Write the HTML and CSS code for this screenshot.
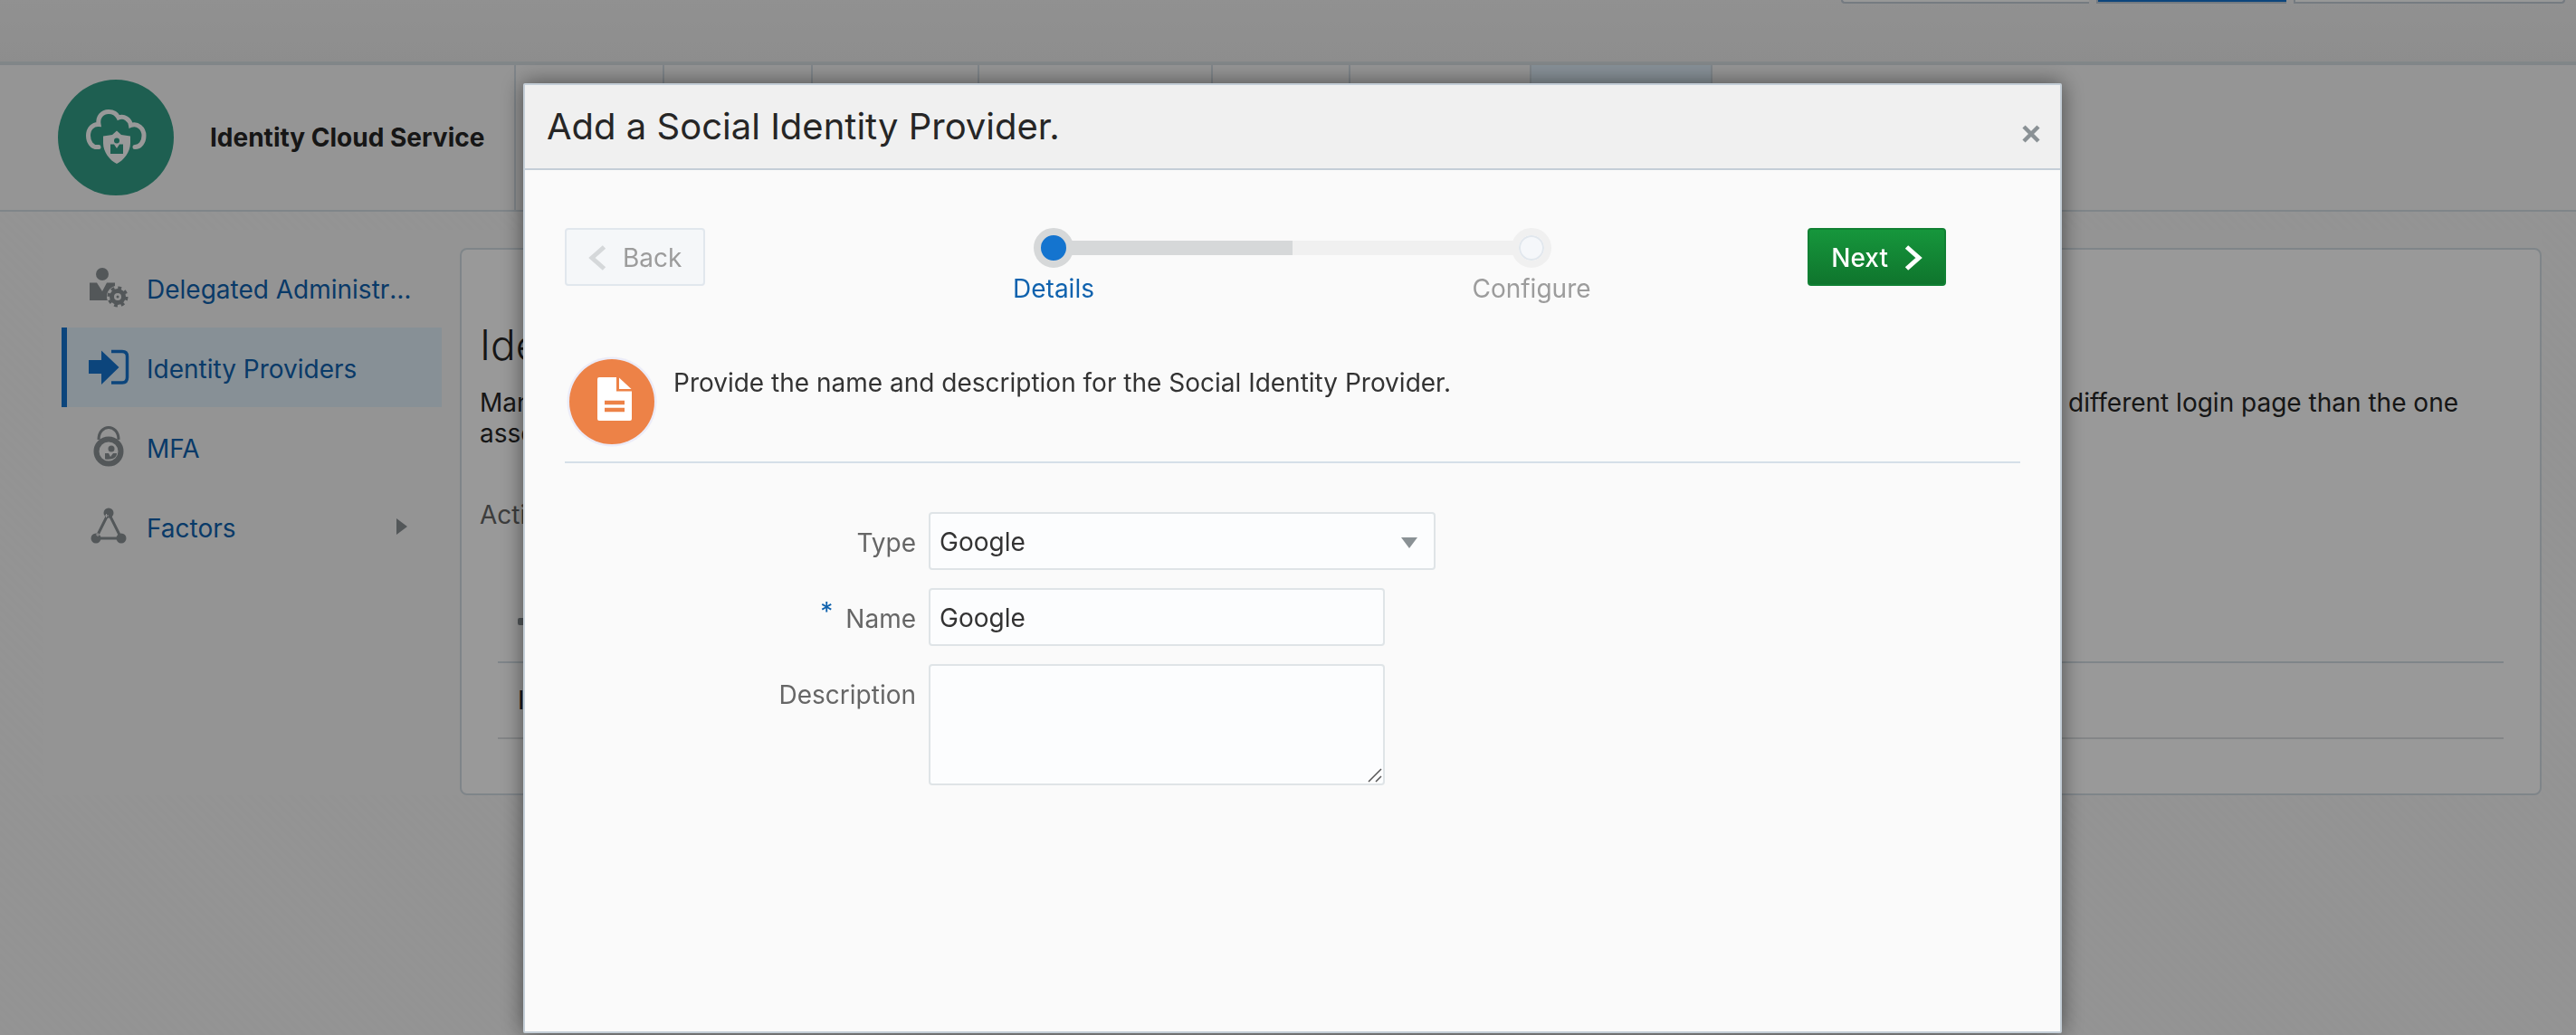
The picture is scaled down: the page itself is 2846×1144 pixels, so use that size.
FILE: index.html
```html
<!DOCTYPE html>
<html lang="en">
<head>
<meta charset="utf-8">
<title>Identity Cloud Service</title>
<link rel="stylesheet" href="styles.css">
</head>
<body>
<div class="page">
  <div class="topbar">
    <button class="topbar-button" type="button" aria-label="Previous"></button>
    <button class="topbar-button topbar-button-active" type="button" aria-label="Current"></button>
    <button class="topbar-button topbar-button-last" type="button" aria-label="Next view"></button>
  </div>

  <header class="service-header">
    <div class="service-brand">
      <svg class="service-logo" viewBox="0 0 128 128" aria-hidden="true">
        <circle cx="64" cy="64" r="64" fill="#329f87"/>
        <path d="M45 74.500C37 75.500 33.500 68 33.500 62C33.500 54 39 49 45 49.500C43.500 41 49 35.500 56 35.500C61 35.500 65 38 67 42C73 39.500 79.500 44 80.500 50.500C88 47.500 95 54 95 62C95 69 91 74.500 85 74.500" fill="none" stroke="#fff" stroke-width="5" stroke-linecap="round"/>
        <path d="M65 56.500L70 61L80 62.500V70C80 80 73 89 65 93C57 89 50 80 50 70V62.500L60 61Z" fill="#fff"/>
        <circle cx="65" cy="67.500" r="3" fill="#329f87"/>
        <path d="M58 71.500H62L65 76L68 71.500H72V82H58Z" fill="#329f87"/>
      </svg>
      <span class="service-name">Identity Cloud Service</span>
    </div>
    <nav class="service-tabs" aria-label="Service sections">
      <a class="tab tab-users" href="#" aria-label="Dashboard"></a>
      <a class="tab tab-users" href="#" aria-label="Users"></a>
      <a class="tab tab-groups" href="#" aria-label="Groups"></a>
      <a class="tab tab-apps" href="#" aria-label="Applications"></a>
      <a class="tab tab-jobs" href="#" aria-label="Jobs"></a>
      <a class="tab tab-wide" href="#" aria-label="Reports"></a>
      <a class="tab tab-wide tab-selected" href="#" aria-label="Security"></a>
    </nav>
  </header>

  <main class="workspace">
    <nav class="side-nav" aria-label="Security">
      <a class="side-item" href="#">
        <svg class="side-icon" viewBox="0 0 48 48" aria-hidden="true">
          <g fill="#8a9195">
            <circle cx="17" cy="9" r="7"/>
            <path d="M3 18.500H11L17 28L22 18.500H31V22C25 24 22 29 22 33C22 35 22 37 23 38H3Z"/>
          </g>
          <circle cx="34" cy="34" r="6.500" fill="none" stroke="#8a9195" stroke-width="5"/>
          <circle cx="34" cy="34" r="9.500" fill="none" stroke="#8a9195" stroke-width="4" stroke-dasharray="3.700 3.760"/>
          <circle cx="34" cy="34" r="1.500" fill="#8a9195"/>
        </svg>
        <span class="side-label">Delegated Administrators</span>
      </a>
      <a class="side-item side-item-selected" href="#" aria-current="page">
        <svg class="side-icon" viewBox="0 0 48 48" aria-hidden="true">
          <path d="M2 16H16V5.500L35.500 24L16 43V31H2Z" fill="#1474cf"/>
          <path d="M27 6.500H39Q44.500 6.500 44.500 12V35Q44.500 41 39 41H27" fill="none" stroke="#1474cf" stroke-width="3.500"/>
        </svg>
        <span class="side-label">Identity Providers</span>
      </a>
      <a class="side-item" href="#">
        <svg class="side-icon" viewBox="0 0 48 48" aria-hidden="true">
          <g fill="none" stroke="#8a9195">
            <path d="M13 16C13 -2 35 -2 35 16" stroke-width="3"/>
            <circle cx="24" cy="29" r="13.500" stroke-width="6"/>
          </g>
          <circle cx="27" cy="26" r="3.500" fill="#8a9195"/>
          <path d="M20 31H24L26 35L29 31H33C33 36 28 38.500 20 37.500Z" fill="#8a9195"/>
        </svg>
        <span class="side-label">MFA</span>
      </a>
      <a class="side-item" href="#">
        <svg class="side-icon" viewBox="0 0 48 48" aria-hidden="true">
          <path d="M24 9L10 37H38Z" fill="none" stroke="#8a9195" stroke-width="3"/>
          <g fill="#8a9195">
            <circle cx="24" cy="9" r="5.500"/>
            <circle cx="10" cy="37" r="5.500"/>
            <circle cx="38" cy="37" r="5.500"/>
          </g>
          <path d="M19.500 12H24M21.500 10V14M10 33H14M12 31V35" stroke="#f7f7f7" stroke-width="1"/>
        </svg>
        <span class="side-label">Factors</span>
        <svg class="side-arrow" viewBox="0 0 12 18" aria-hidden="true"><path d="M0 0L12 9L0 18Z" fill="#8a9195"/></svg>
      </a>
    </nav>

    <section class="panel">
      <h1 class="panel-title">Identity Providers</h1>
      <p class="panel-line"><span>Manage the identity providers that your users can sign in with.</span><span>Each account can be given a different login page than the one</span></p>
      <p class="panel-line"><span>associated with the service.</span></p>
      <p class="panel-note">Activate a provider to use it.</p>
      <table class="provider-table">
        <thead>
          <tr><th scope="col">
            <svg class="menu-icon" viewBox="0 0 32 12" role="img" aria-label="Actions"><rect x="0" y="2" width="32" height="8" rx="2" fill="#8a9195"/></svg>
          </th></tr>
        </thead>
        <tbody>
          <tr><td>Identity provider</td></tr>
        </tbody>
      </table>
    </section>
  </main>
</div>

<div class="overlay">
  <div class="dialog" role="dialog" aria-modal="true" aria-labelledby="dialog-title">
    <header class="dialog-header">
      <h2 class="dialog-title" id="dialog-title">Add a Social Identity Provider.</h2>
      <button class="dialog-close" type="button" aria-label="Close">
        <svg class="close-icon" viewBox="0 0 20 20" aria-hidden="true"><path d="M2 2L18 18M18 2L2 18" stroke="#8a9195" stroke-width="4.500"/></svg>
      </button>
    </header>

    <form class="dialog-body">
      <div class="wizard">
        <button class="button button-back" type="button" disabled>
          <svg class="chevron" viewBox="0 0 20 28" aria-hidden="true"><path d="M17.500 2L4 14L17.500 26" fill="none" stroke="#d5d8da" stroke-width="5"/></svg>
          Back
        </button>
        <ol class="train">
          <li class="stop">
            <div class="stop-track">
              <span class="rail"></span>
              <span class="stop-marker stop-marker-current"></span>
              <span class="rail rail-done"></span>
            </div>
            <a class="stop-label" href="#" aria-current="step">Details</a>
          </li>
          <li class="stop">
            <div class="stop-track">
              <span class="rail rail-todo"></span>
              <span class="stop-marker"></span>
              <span class="rail"></span>
            </div>
            <span class="stop-label stop-label-disabled">Configure</span>
          </li>
        </ol>
        <button class="button button-next" type="button">
          Next
          <svg class="chevron" viewBox="0 0 20 28" aria-hidden="true"><path d="M2.500 2L16 14L2.500 26" fill="none" stroke="#fff" stroke-width="5"/></svg>
        </button>
      </div>

      <div class="intro">
        <svg class="intro-icon" viewBox="0 0 104 104" aria-hidden="true">
          <circle cx="52" cy="52" r="49.500" fill="#ececf8"/>
          <circle cx="52" cy="52" r="47" fill="#ed8247"/>
          <path d="M37 25H57V40.500H74V71Q74 73 72 73H38Q36 73 36 71V27Q36 25 38 25Z" fill="#fff"/>
          <path d="M60 25.500L73.500 38H60Z" fill="#fff"/>
          <path d="M44 53H66M44 61H66" stroke="#ed8247" stroke-width="4.500"/>
        </svg>
        <p class="intro-text">Provide the name and description for the Social Identity Provider.</p>
      </div>

      <div class="fields">
        <label class="field-label" for="type">Type</label>
        <div class="select-box">
          <select class="control control-select" id="type"><option>Google</option></select>
          <svg class="select-arrow" viewBox="0 0 18 12" aria-hidden="true"><path d="M0 0H18L9 12Z" fill="#8a9195"/></svg>
        </div>

        <label class="field-label" for="name"><span class="required">*</span>Name</label>
        <input class="control" id="name" type="text" value="Google" required>

        <label class="field-label" for="description">Description</label>
        <div class="area-box">
          <textarea class="control control-area" id="description"></textarea>
          <svg class="area-grip" viewBox="0 0 16 16" aria-hidden="true"><path d="M1 15L15 1M9 15L15 9" stroke="#555" stroke-width="1.500"/></svg>
        </div>
      </div>
    </form>
  </div>
</div>
</body>
</html>
```
FILE: styles.css
```css
* {
  box-sizing: border-box;
}

body {
  margin: 0;
  background: repeating-linear-gradient(45deg, #f7f7f7 0 4px, #f5f5f5 4px 8px);
  color: #262626;
  font-family: Inter, "Liberation Sans", sans-serif;
  font-size: 28px;
  line-height: 34px;
}

h1,
h2,
p,
ol {
  margin: 0;
  padding: 0;
}

a {
  color: #0f62ae;
  text-decoration: none;
}

button,
input,
select,
textarea {
  font: inherit;
}

.page {
  min-height: 100vh;
}

/* Top bar */

.topbar {
  display: flex;
  justify-content: flex-end;
  align-items: flex-start;
  gap: 8px;
  height: 72px;
  padding-right: 12px;
  background: linear-gradient(#f2f2f2, #ececec);
  border-bottom: 4px solid #d8dfe3;
}

.topbar-button {
  width: 274px;
  height: 4px;
  padding: 0;
  background: #fcfdfe;
  border: 2px solid #c4ced7;
  border-top: 0;
  border-right: 0;
  border-radius: 0 0 0 6px;
}

.topbar-button-active {
  width: 210px;
  background: #1474cf;
  border-radius: 0;
}

.topbar-button-last {
  width: 300px;
  border-right: 2px solid #c4ced7;
  border-radius: 0 0 6px 0;
}

/* Service header */

.service-header {
  display: flex;
  height: 162px;
  background: #f8f8f8;
  border-bottom: 2px solid #d4dee5;
}

.service-brand {
  display: flex;
  align-items: center;
  gap: 40px;
  width: 570px;
  padding-left: 64px;
  border-right: 2px solid #d4dee5;
}

.service-logo {
  width: 128px;
  height: 128px;
}

.service-name {
  font-weight: 700;
  white-space: nowrap;
}

.service-tabs {
  display: flex;
}

.tab {
  width: 164px;
  border-right: 2px solid #d4dee5;
}

.tab-groups {
  width: 184px;
}

.tab-apps {
  width: 258px;
}

.tab-jobs {
  width: 152px;
}

.tab-wide {
  width: 200px;
}

.tab-selected {
  background: #e1f0fb;
}

/* Workspace */

.workspace {
  display: flex;
  gap: 20px;
  margin: 20px 38px 0 48px;
  padding: 20px 0 0 20px;
  background: #f7f7f7;
}

.side-nav {
  flex: none;
  width: 420px;
}

.side-item {
  display: flex;
  align-items: center;
  height: 88px;
  padding: 0 22px;
  border-left: 6px solid transparent;
}

.side-item-selected {
  background: #e1f0fb;
  border-left-color: #1474cf;
}

.side-icon {
  flex: none;
  width: 48px;
  height: 48px;
  margin-right: 18px;
}

.side-label {
  flex: 1;
  padding-top: 3px;
  overflow: hidden;
  text-overflow: ellipsis;
  white-space: nowrap;
}

.side-arrow {
  width: 12px;
  height: 18px;
  margin-right: 16px;
}

.panel {
  flex: 1;
  min-width: 0;
  padding: 76px 20px 60px;
  background: #fff;
  border: 2px solid #d4dee5;
  border-radius: 8px;
}

.panel-title {
  margin-bottom: 18px;
  font-size: 46px;
  font-weight: 300;
  line-height: 58px;
}

.panel-line {
  display: flex;
  justify-content: space-between;
  padding-right: 70px;
  white-space: nowrap;
}

.panel-note {
  margin: 56px 0;
  color: #666;
}

.provider-table {
  width: calc(100% - 40px);
  margin: 0 20px;
  border-collapse: collapse;
}

.provider-table th {
  height: 90px;
  padding: 0 22px;
  border-bottom: 2px solid #d4dee5;
  text-align: left;
}

.provider-table td {
  height: 84px;
  padding: 0 22px;
  border-bottom: 2px solid #dcdfe1;
}

.menu-icon {
  display: block;
  width: 32px;
  height: 12px;
}

/* Dialog */

.overlay {
  position: fixed;
  inset: 0;
  display: flex;
  justify-content: center;
  padding: 92px 0 2px 10px;
  background: rgba(0, 0, 0, 0.4);
}

.dialog {
  display: flex;
  flex-direction: column;
  width: 60%;
  max-width: 1700px;
  background: #fafafa;
  border: 2px solid #c4ced7;
  border-radius: 2px;
  box-shadow: 0 0 24px rgba(0, 0, 0, 0.5);
}

.dialog-header {
  display: flex;
  align-items: center;
  justify-content: space-between;
  padding: 22px 22px 22px 24px;
  background: #f0f0f0;
  border-bottom: 2px solid #c4ced7;
}

.dialog-title {
  font-size: 40px;
  font-weight: 400;
  line-height: 48px;
}

.dialog-close {
  display: flex;
  padding: 16px 0 0;
  background: none;
  border: 0;
}

.close-icon {
  width: 20px;
  height: 20px;
}

.dialog-body {
  flex: 1;
  padding: 64px 44px;
  overflow: auto;
}

.wizard {
  display: grid;
  grid-template-columns: 1fr auto 1fr;
  align-items: start;
}

.button {
  display: flex;
  align-items: center;
  justify-content: center;
  gap: 18px;
  height: 64px;
  padding: 2px 24px 0;
  border-radius: 4px;
}

.button-back {
  justify-self: start;
  background: #f5f7f9;
  border: 2px solid #e1e7ed;
  color: #9c9c9c;
}

.button-next {
  justify-self: end;
  margin-right: 82px;
  background: linear-gradient(#16963c, #0f752d);
  border: 2px solid #108033;
  color: #fff;
  font-weight: 500;
}

.chevron {
  width: 20px;
  height: 28px;
}

.train {
  display: grid;
  grid-template-columns: 528px 528px;
  list-style: none;
}

.stop {
  text-align: center;
}

.stop-track {
  display: flex;
  align-items: center;
  margin-bottom: 6px;
}

.rail {
  flex: 1;
  height: 16px;
}

.rail-done {
  background: #d6d8d9;
}

.rail-todo {
  background: #f0f0f0;
}

.stop-marker {
  width: 44px;
  height: 44px;
  margin: 0 -2px;
  background: #f5f7fa;
  background-clip: padding-box;
  border: 8px solid #f0f0f0;
  border-radius: 50%;
  box-shadow: inset 0 0 0 2px #e1e7ed;
}

.stop-marker-current {
  background: #1474cf;
  border-color: #d6d8d9;
  box-shadow: none;
}

.stop-label-disabled {
  color: #9c9c9c;
}

.intro {
  display: flex;
  gap: 16px;
  margin-top: 56px;
  padding-bottom: 14px;
  border-bottom: 2px solid #d5dfe8;
}

.intro-icon {
  width: 104px;
  height: 104px;
}

.intro-text {
  padding-top: 14px;
  color: #333;
}

.fields {
  display: grid;
  grid-template-columns: 388px minmax(0, 1fr);
  gap: 20px 14px;
  padding-top: 54px;
}

.field-label {
  padding-top: 17px;
  color: #666;
  text-align: right;
}

.required {
  margin-right: 14px;
  color: #0f62ae;
  line-height: 0;
  vertical-align: 8px;
}

.control {
  display: block;
  width: 504px;
  max-width: 100%;
  height: 64px;
  padding: 2px 10px 0;
  background: #fcfdfe;
  border: 2px solid #dfe4e7;
  border-radius: 4px;
  color: #333;
}

.select-box {
  position: relative;
  width: 560px;
  max-width: 100%;
}

.control-select {
  width: 100%;
  appearance: none;
}

.select-arrow {
  position: absolute;
  top: 28px;
  right: 20px;
  width: 18px;
  height: 12px;
  pointer-events: none;
}

.area-box {
  position: relative;
  width: 504px;
  max-width: 100%;
}

.control-area {
  height: 134px;
  padding: 10px;
  resize: none;
}

.area-grip {
  position: absolute;
  right: 3px;
  bottom: 3px;
  width: 16px;
  height: 16px;
  pointer-events: none;
}
```
